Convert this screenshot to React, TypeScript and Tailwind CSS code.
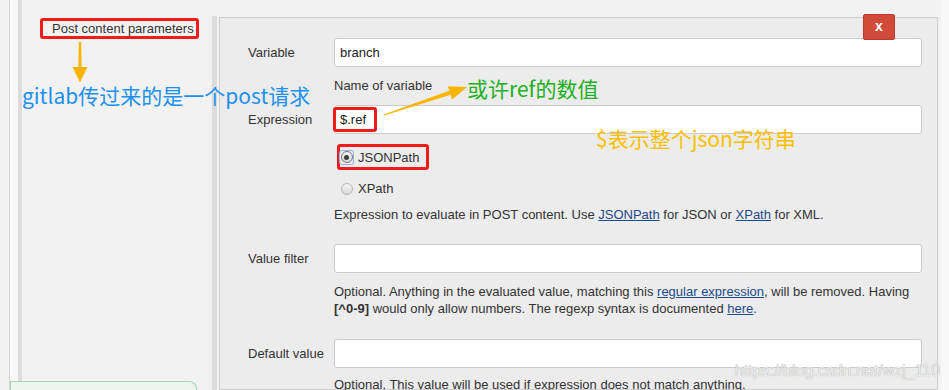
import React from "react";

function Radio({ checked }: { checked?: boolean }) {
  return (
    <span className="relative inline-flex w-[13px] h-[13px] shrink-0 items-center justify-center">
      {checked && (
        <span className="absolute -inset-[1px] rounded-[3px] border border-[#8fb4e8]" />
      )}
      <span
        className={
          "w-[12px] h-[12px] rounded-full border flex items-center justify-center bg-gradient-to-b from-[#f4f4f4] to-[#d8d8d8] " +
          (checked ? "border-[#7a7a7a]" : "border-[#b4b4b4]")
        }
      >
        {checked && <span className="w-[5px] h-[5px] rounded-full bg-[#3d3d3d]" />}
      </span>
    </span>
  );
}

function Input({ value }: { value?: string }) {
  return (
    <div className="flex-1 h-[29px] bg-white border border-[#cccccc] rounded-[3px] flex items-center pl-[5px] text-[13px] text-[#222]">
      {value}
    </div>
  );
}

export default function App() {
  return (
    <div className="relative w-[949px] h-[390px] overflow-hidden bg-[#f2f2f2] flex font-['Liberation_Sans',Arial,sans-serif] text-[13px] leading-[17px] text-[#333]">
      {/* left gutter */}
      <div className="w-[9px] shrink-0" />
      {/* sidebar */}
      <div className="w-[203px] shrink-0 flex flex-col border-l border-[#d4d4d4]">
        <div className="flex-1 flex">
          <div className="w-[8px] bg-[#f8f8f8]" />
          <div className="w-[4px] bg-[#dcdcdc]" />
          <div className="flex-1 pt-[18px] pl-[18px]">
            <div className="inline-flex items-center h-[21px] border-[3px] border-[#f01c1c] rounded-[3px] pl-[9px] pr-[2px] text-[13px] text-[#333] whitespace-nowrap">
              Post content parameters
            </div>
          </div>
        </div>
        <div className="h-[9px] w-[187px] border-t border-r border-l border-[#a9d6b6] rounded-tr-[8px] bg-[#eef5ef]" />
      </div>
      <div className="w-[5px] shrink-0 mt-[16px] bg-[#dcdcdc]" />
      <div className="w-[2px] shrink-0" />
      {/* panel */}
      <div className="relative w-[719px] shrink-0 mt-[17px] border border-[#cfcfcf] bg-[#ececec] pl-[28px] pr-[15px] pt-[20px]">
        <div className="absolute top-[-4px] right-[42px] w-[32px] h-[26px] bg-[#d24a3a] border border-[#c0392b] rounded-[2px] flex items-center justify-center text-white font-bold text-[14px] leading-none pb-[2px]">
          x
        </div>

        <div className="flex items-center">
          <div className="w-[86px] shrink-0">Variable</div>
          <Input value="branch" />
        </div>
        <div className="ml-[86px] mt-[10px]">Name of variable</div>

        <div className="flex items-center mt-[11px]">
          <div className="w-[86px] shrink-0">Expression</div>
          <Input value="$.ref" />
        </div>

        <div className="ml-[89px] mt-[10px] inline-flex items-center h-[26px] border-[3px] border-[#f01c1c] rounded-[3px] pr-[7px]">
          <Radio checked />
          <span className="ml-[5px]">JSONPath</span>
        </div>
        <div className="ml-[92px] mt-[10px] flex items-center h-[17px]">
          <Radio />
          <span className="ml-[5px]">XPath</span>
        </div>

        <div className="ml-[86px] mt-[9px] whitespace-nowrap">
          Expression to evaluate in POST content. Use{" "}
          <span className="underline text-[#1d4a8a]">JSONPath</span> for JSON or{" "}
          <span className="underline text-[#1d4a8a]">XPath</span> for XML.
        </div>

        <div className="flex items-center mt-[21px]">
          <div className="w-[86px] shrink-0">Value filter</div>
          <Input />
        </div>
        <div className="ml-[86px] mt-[10px] whitespace-nowrap">
          Optional. Anything in the evaluated value, matching this{" "}
          <span className="underline text-[#1d4a8a]">regular expression</span>, will be removed. Having
          <br />
          <span className="font-bold">[^0-9]</span> would only allow numbers. The regexp syntax is documented{" "}
          <span className="underline text-[#1d4a8a]">here</span>.
        </div>

        <div className="flex items-center mt-[22px]">
          <div className="w-[86px] shrink-0">Default value</div>
          <Input />
        </div>
        <div className="ml-[86px] mt-[8px] whitespace-nowrap">
          Optional. This value will be used if expression does not match anything.
        </div>
      </div>
      <div className="w-[3px] shrink-0" />
      <div className="flex-1 bg-[#f8f8f8]" />

      {/* annotations */}
      <div className="absolute left-[333px] top-[107px] w-[44px] h-[25px] border-[3px] border-[#f01c1c] rounded-[3px]" />

      <svg className="absolute left-[70px] top-[40px]" width="20" height="44" viewBox="0 0 20 44">
        <polygon points="8.8,2 11.2,2 11.6,27 17.5,27 10,42.5 2.5,27 8.4,27" fill="#f8b500" />
      </svg>

      <svg className="absolute left-[378px] top-[80px]" width="95" height="40" viewBox="0 0 95 40">
        <polygon
          points="5.84,34.53 71.3,10.87 69.71,6.13 89,7 74.19,19.39 72.6,14.65 6.16,35.47"
          fill="#f8b500"
        />
      </svg>

      <div className="absolute left-[22px] top-[81px] whitespace-nowrap font-['Noto_Sans_CJK_SC',sans-serif] text-[21px] leading-[28px] text-[#2090f0]">
        gitlab传过来的是一个post请求
      </div>
      <div className="absolute left-[467px] top-[74px] whitespace-nowrap font-['Noto_Sans_CJK_SC',sans-serif] text-[21px] leading-[28px] text-[#20b020]">
        或许ref的数值
      </div>
      <div className="absolute left-[596px] top-[124px] whitespace-nowrap font-['Noto_Sans_CJK_SC',sans-serif] text-[21px] leading-[28px] text-[#fcc000]">
        $表示整个json字符串
      </div>

      <div className="absolute left-[735px] top-[361px] whitespace-nowrap font-['Liberation_Sans',Arial,sans-serif] text-[16px] leading-[20px] text-[#ececec] [text-shadow:0_0_1px_#9a9a9a]">
        https://blog.csdn.net/wzj_110
      </div>
    </div>
  );
}
